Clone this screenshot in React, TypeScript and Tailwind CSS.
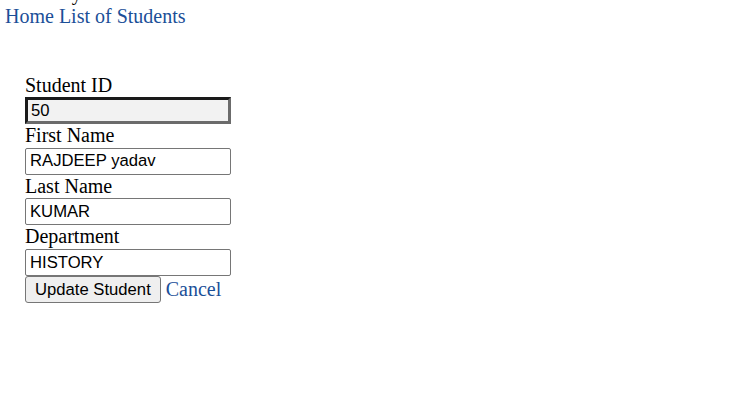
import React from 'react';

const serif = 'font-["Liberation_Serif","Times_New_Roman",serif]';
const sans = 'font-["Liberation_Sans",Arial,sans-serif]';

const fields = [
  { label: 'First Name', value: 'RAJDEEP yadav' },
  { label: 'Last Name', value: 'KUMAR' },
  { label: 'Department', value: 'HISTORY' },
];

export default function App() {
  return (
    <div className={`${serif} text-[20px] leading-[23px] text-black bg-white min-h-[407px] overflow-hidden`}>
      <div className="-mt-[18px] pl-[5px]">Academy</div>
      <nav className="pl-[5px] text-[#1b4f98]">
        <a href="#">Home</a> <a href="#">List of Students</a>
      </nav>

      <form className="mt-[46px] pl-[25px]" onSubmit={(e) => e.preventDefault()}>
        <label className="block">Student ID</label>
        <input
          readOnly
          defaultValue="50"
          className={`${sans} block w-[206px] h-[27px] px-[3px] text-[16.67px] leading-[19px] bg-[#f2f2f2] border-[3px] border-t-[#1a1a1a] border-l-[#1a1a1a] border-b-[#6b6b6b] border-r-[#6b6b6b] outline-none`}
        />
        {fields.map((f) => (
          <div key={f.label}>
            <label className="block leading-[23.67px]">{f.label}</label>
            <input
              defaultValue={f.value}
              className={`${sans} block w-[206px] h-[27px] px-[4px] text-[16.67px] leading-[19px] border border-[#767676] rounded-[2px] bg-white outline-none`}
            />
          </div>
        ))}
        <div className="flex items-center gap-[5px]">
          <button
            type="submit"
            className={`${sans} h-[27px] px-[9px] text-[16.67px] bg-[#efefef] border border-[#767676] rounded-[3px]`}
          >
            Update Student
          </button>
          <a href="#" className="text-[#1b4f98]">Cancel</a>
        </div>
      </form>
    </div>
  );
}
